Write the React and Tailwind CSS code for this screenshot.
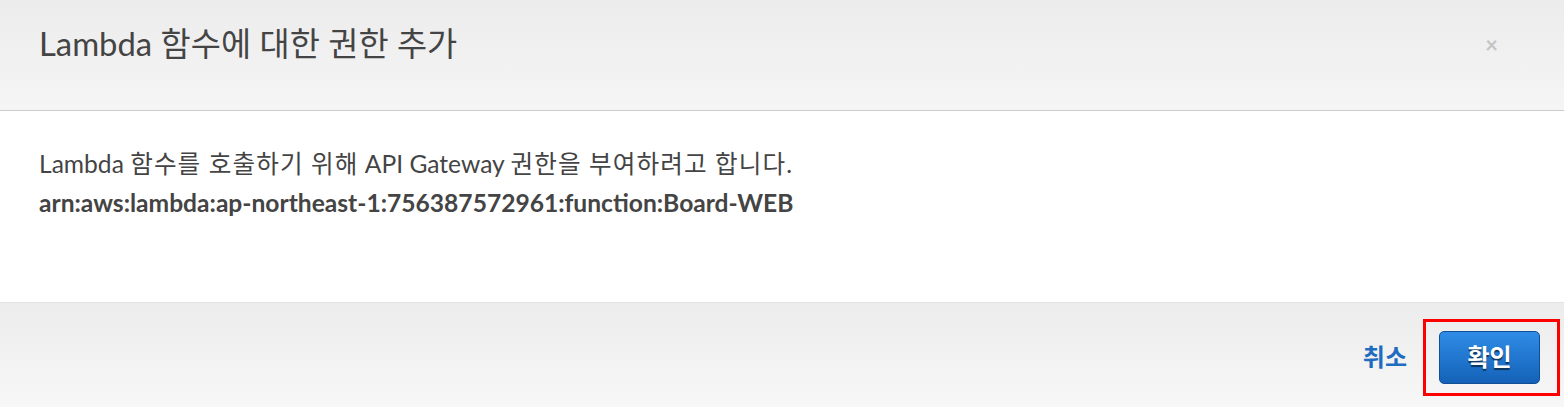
export default function App() {
  const font = { fontFamily: 'Lato, "Noto Sans CJK KR", sans-serif' };
  const ko = 'tracking-[1.1px]';
  return (
    <div className="w-[1564px] h-[407px] flex flex-col text-[#444] overflow-hidden" style={font}>
      {/* header */}
      <div className="h-[111px] shrink-0 flex items-start justify-between pl-[39px] pr-[66px] pt-[28px] bg-gradient-to-b from-[#ececec] to-[#f5f5f5] border-b border-[#cccccc]">
        <h1 className="text-[32.8px] font-normal leading-none text-[#444]">Lambda 함수에 대한 권한 추가</h1>
        <span className="text-[22px] font-bold text-[#c4c4c4] leading-none mt-[6px]">×</span>
      </div>

      {/* body */}
      <div className="h-[191px] shrink-0 bg-white pl-[39px] pt-[35px]">
        <p className="text-[24.6px] leading-[35px]">
          Lambda <span className={ko}>함수를 호출하기 위해</span> API Gateway <span className={ko}>권한을 부여하려고 합니다</span>.
        </p>
        <p className="text-[24.6px] leading-[35px] font-bold mt-[4px]">arn:aws:lambda:ap-northeast-1:756387572961:function:Board-WEB</p>
      </div>

      {/* footer */}
      <div className="flex-1 flex items-center justify-end pr-[4px] pt-[4px] bg-gradient-to-b from-[#ececec] to-[#f7f7f7] border-t border-[#e3e3e3]">
        <button className="text-[24px] font-bold text-[#1f6cc0] leading-none mr-[16px]">취소</button>
        <div className="border-[3px] border-[#ff0000] w-[137px] h-[77px] pl-[13px] pt-[9px]">
          <button className="w-[101px] h-[53px] rounded-[5px] border border-[#0f4f96] bg-gradient-to-b from-[#2f8ce6] to-[#1462b8] text-white text-[24px] font-bold leading-none [text-shadow:0_2px_1px_rgba(0,0,0,0.55)]">
            확인
          </button>
        </div>
      </div>
    </div>
  );
}
